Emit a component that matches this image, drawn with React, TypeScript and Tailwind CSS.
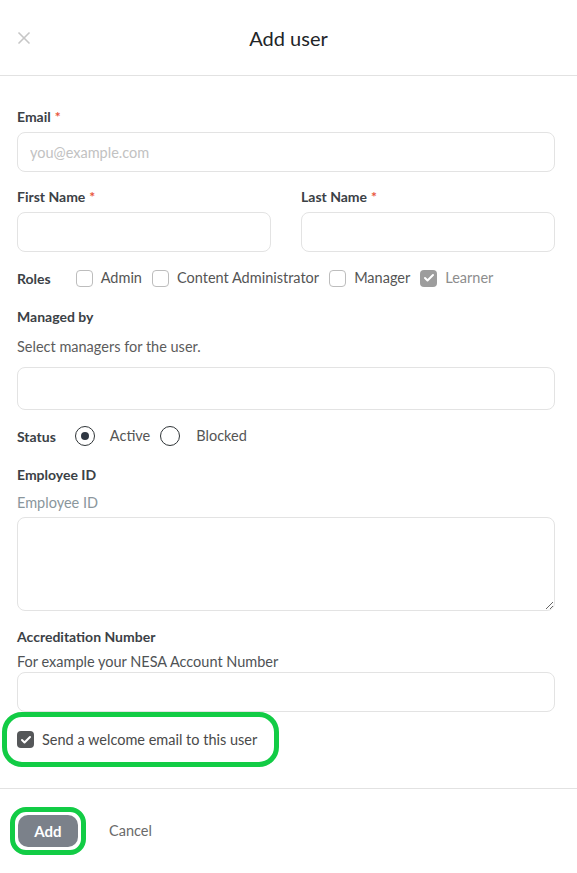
import { X, Check } from "lucide-react";

function Label({ children, required }: { children: React.ReactNode; required?: boolean }) {
  return (
    <div className="text-[14px] font-bold leading-4 text-[#3b4146]">
      {children}
      {required && <span className="ml-1 text-[#e8553b]">*</span>}
    </div>
  );
}

function Box({ checked, muted }: { checked?: boolean; muted?: boolean }) {
  if (checked) {
    return (
      <span
        className={`grid h-[17px] w-[17px] shrink-0 place-items-center rounded-[4px] ${
          muted ? "bg-[#9d9d9d]" : "bg-[#555759]"
        }`}
      >
        <Check className="h-3 w-3 text-white" strokeWidth={4} />
      </span>
    );
  }
  return <span className="h-[17px] w-[17px] shrink-0 rounded-[4px] border border-[#bdbdbd] bg-white" />;
}

function Radio({ on }: { on?: boolean }) {
  return (
    <span className="grid h-5 w-5 shrink-0 place-items-center rounded-full border-[1.5px] border-[#2f3437]">
      {on && <span className="h-2 w-2 rounded-full bg-[#2f3742]" />}
    </span>
  );
}

const input = "w-full rounded-lg border border-[#e3e3e3] bg-white px-3 text-sm outline-none";

export default function App() {
  return (
    <div
      className="min-h-[873px] w-[577px] bg-white text-[#444]"
      style={{ fontFamily: "Lato, 'Noto Sans', sans-serif" }}
    >
      <div className="relative flex h-[76px] items-center justify-center border-b border-[#e2e2e2]">
        <X className="absolute left-[14px] top-[28px] h-5 w-5 text-[#c6c6c6]" strokeWidth={2} />
        <h1 className="text-[20px] text-[#222528]">Add user</h1>
      </div>

      <div className="flex flex-col pl-[17px] pr-[22px] pt-[33px]">
        <Label required>Email</Label>
        <input
          className={`${input} mt-[7px] h-10 text-[14.5px] placeholder:text-[#c2c2c2]`}
          placeholder="you@example.com"
        />

        <div className="mt-[17px] grid grid-cols-2 gap-[30px]">
          <div className="flex flex-col">
            <Label required>First Name</Label>
            <input className={`${input} mt-[7px] h-10`} />
          </div>
          <div className="flex flex-col">
            <Label required>Last Name</Label>
            <input className={`${input} mt-[7px] h-10`} />
          </div>
        </div>

        <div className="mt-[16px] flex h-5 items-center text-[14.5px]">
          <span className="text-[14px] font-bold text-[#3b4146]">Roles</span>
          <span className="ml-[25px] flex items-center gap-[8px]">
            <Box />
            <span className="text-[#555]">Admin</span>
          </span>
          <span className="ml-[10px] flex items-center gap-[8px]">
            <Box />
            <span className="text-[#555]">Content Administrator</span>
          </span>
          <span className="ml-[10px] flex items-center gap-[8px]">
            <Box />
            <span className="text-[#555]">Manager</span>
          </span>
          <span className="ml-[10px] flex items-center gap-[8px]">
            <Box checked muted />
            <span className="text-[#8d8d8d]">Learner</span>
          </span>
        </div>

        <div className="mt-[21px]">
          <Label>Managed by</Label>
        </div>
        <div className="mt-[12px] text-[14.5px] leading-5 text-[#5c5c5c]">Select managers for the user.</div>
        <div className={`${input} mt-[10px] h-[43px]`} />

        <div className="mt-[16px] flex h-5 items-center text-[14.5px]">
          <span className="text-[14px] font-bold text-[#3b4146]">Status</span>
          <span className="ml-[19px]">
            <Radio on />
          </span>
          <span className="ml-[15px] text-[#555]">Active</span>
          <span className="ml-[10px]">
            <Radio />
          </span>
          <span className="ml-[16px] text-[#555]">Blocked</span>
        </div>

        <div className="mt-[21px]">
          <Label>Employee ID</Label>
        </div>
        <div className="mt-[10px] text-[14.5px] leading-5 text-[#8a969c]">Employee ID</div>
        <textarea className={`${input} mt-[4px] h-[94px] py-2`} />

        <div className="mt-[18px]">
          <Label>Accreditation Number</Label>
        </div>
        <div className="mt-[7px] text-[14.5px] leading-5 text-[#4f5356]">For example your NESA Account Number</div>
        <input className={`${input} h-10`} />

        <div className="-ml-[15px] flex h-[55px] w-[277px] items-center gap-[8px] rounded-[20px] border-[5px] border-[#12cc45] pl-[10px] text-[14.5px] text-[#4a4a4a]">
          <Box checked />
          <span>Send a welcome email to this user</span>
        </div>
      </div>

      <div className="mt-[21px] flex items-center border-t border-[#e2e2e2] px-[10px] pt-[18px]">
        <div className="rounded-[16px] border-[5px] border-[#12cc45] p-[3px]">
          <button className="h-8 w-[60px] rounded-[10px] bg-[#7b818a] text-[15px] font-bold text-white">Add</button>
        </div>
        <span className="ml-[23px] text-[14.5px] text-[#6a6a6a]">Cancel</span>
      </div>
    </div>
  );
}
